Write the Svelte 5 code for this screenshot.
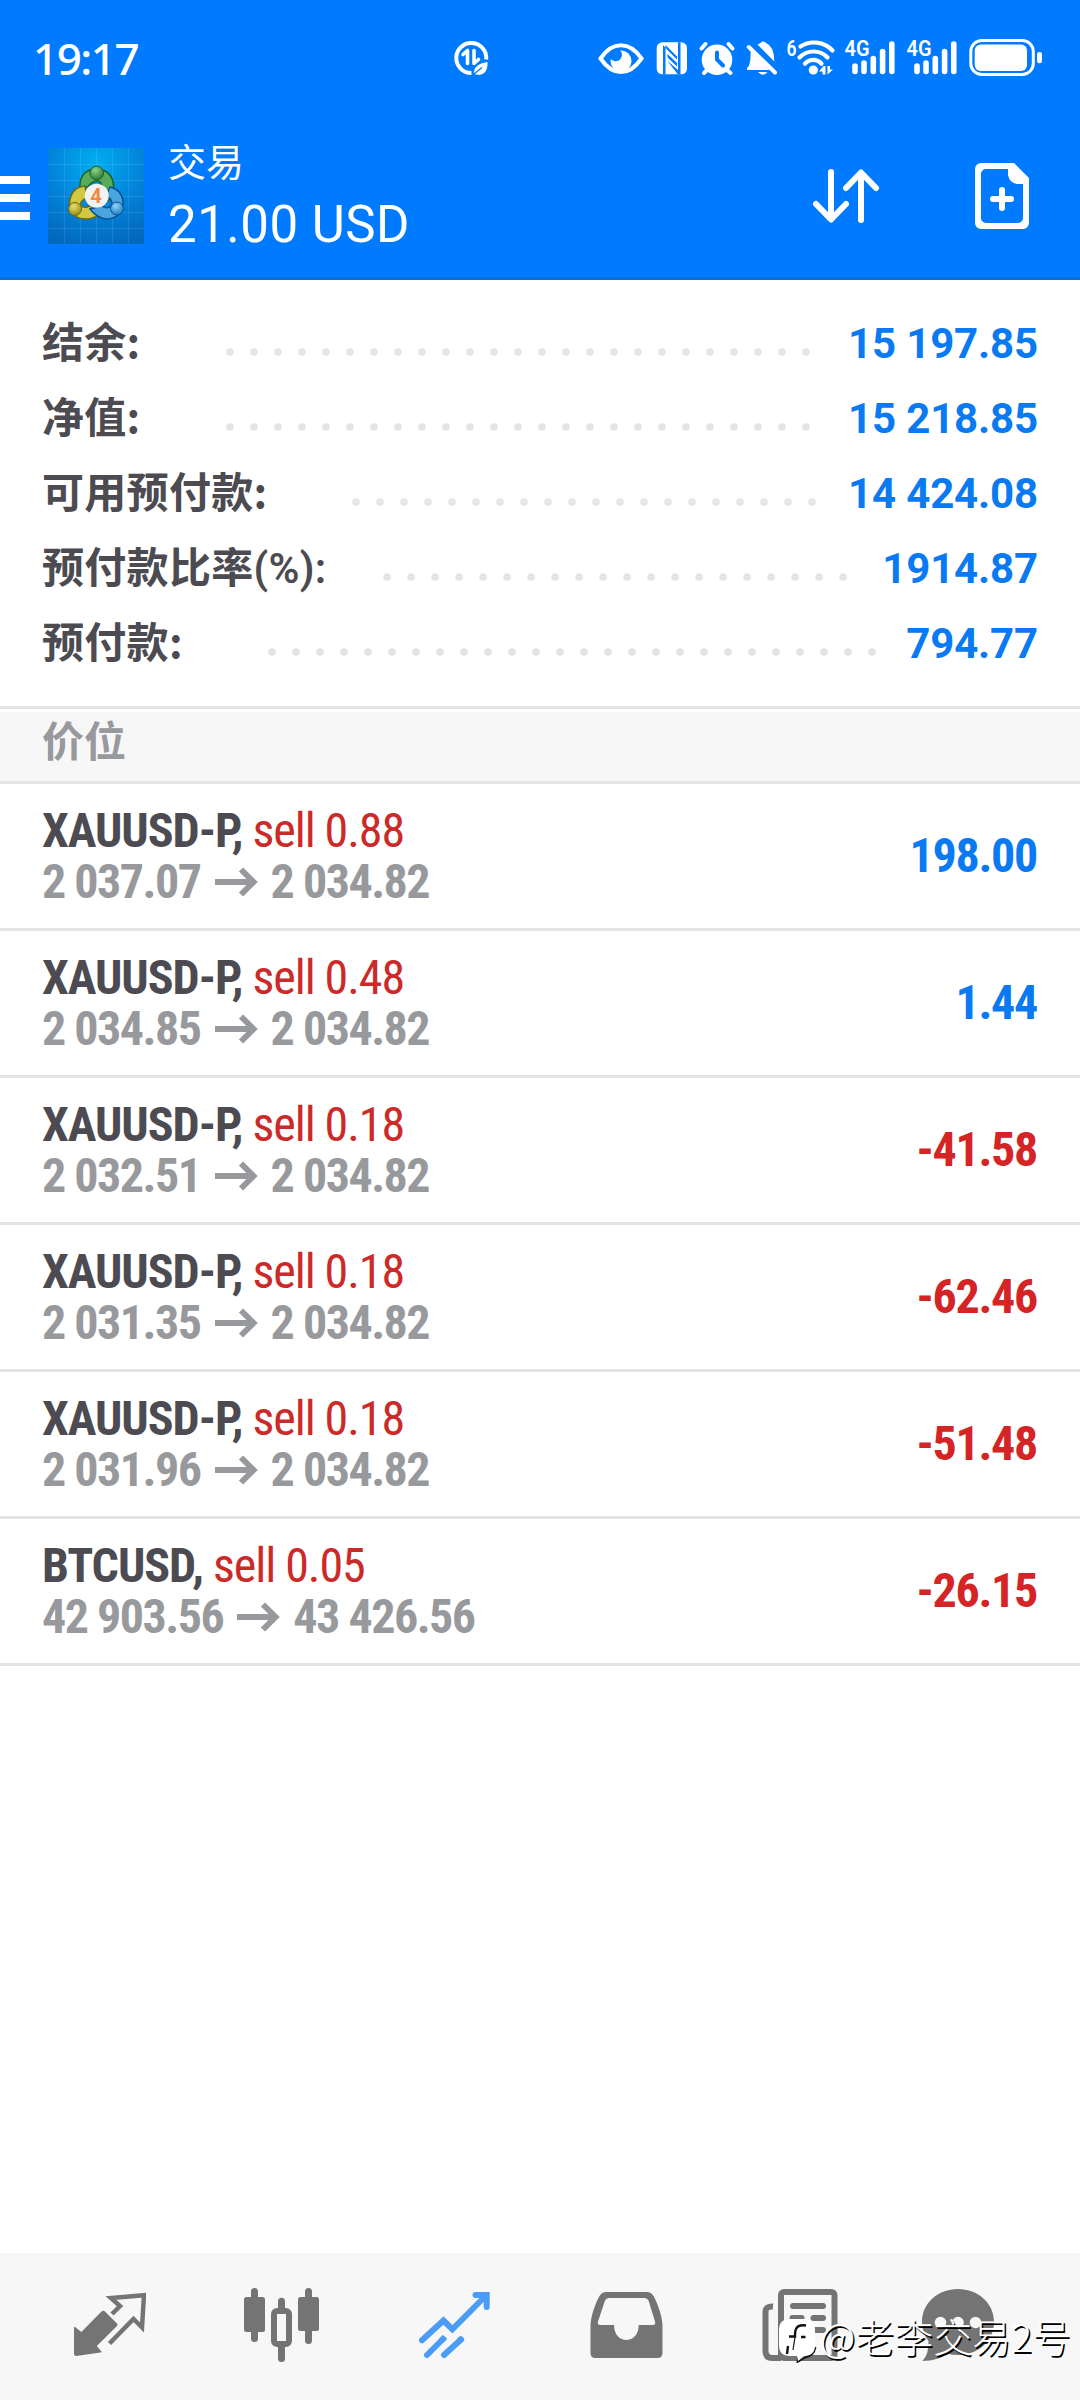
<script lang="ts">
	type Balance = { label: string; suffix?: string; value: string; dots: number };
	type Position = {
		symbol: string;
		volume: string;
		open: string;
		current: string;
		profit: string;
	};

	const balances: Balance[] = [
		{ label: '结余:', value: '15 197.85', dots: 25 },
		{ label: '净值:', value: '15 218.85', dots: 25 },
		{ label: '可用预付款:', value: '14 424.08', dots: 20 },
		{ label: '预付款比率', suffix: '(%):', value: '1914.87', dots: 20 },
		{ label: '预付款:', value: '794.77', dots: 26 }
	];

	const positions: Position[] = [
		{ symbol: 'XAUUSD-P', volume: '0.88', open: '2 037.07', current: '2 034.82', profit: '198.00' },
		{ symbol: 'XAUUSD-P', volume: '0.48', open: '2 034.85', current: '2 034.82', profit: '1.44' },
		{ symbol: 'XAUUSD-P', volume: '0.18', open: '2 032.51', current: '2 034.82', profit: '-41.58' },
		{ symbol: 'XAUUSD-P', volume: '0.18', open: '2 031.35', current: '2 034.82', profit: '-62.46' },
		{ symbol: 'XAUUSD-P', volume: '0.18', open: '2 031.96', current: '2 034.82', profit: '-51.48' },
		{ symbol: 'BTCUSD', volume: '0.05', open: '42 903.56', current: '43 426.56', profit: '-26.15' }
	];

	const bars = [
		{ x: 9, top: 28 },
		{ x: 18, top: 25 },
		{ x: 27.3, top: 20.5 },
		{ x: 36.6, top: 13.5 },
		{ x: 45.8, top: 6 }
	];
</script>

<div class="screen">
	<header>
		<div class="status">
			<span class="time">19:17</span>
			<svg class="saver" width="36" height="36" viewBox="0 0 36 36" fill="none" stroke="#fff">
				<path d="M33.2 19.5A15 15 0 1 0 18.5 33" stroke-width="4" />
				<path d="M10 14.5L14.5 10.5V23.5M21 10.5V23.5L25.5 19.5" stroke-width="3.6" stroke-linejoin="round" stroke-linecap="round" />
				<path d="M21 34Q20 24 34.5 22Q35 34 26 35Z" fill="#fff" stroke="none" />
				<path d="M21 34L29 27.5" stroke="#007aff" stroke-width="1.3" />
			</svg>
			<div class="status-icons">
				<!-- eye comfort -->
				<svg width="48" height="40" viewBox="0 0 48 40">
					<path d="M3.5 20.5C10 11 17 7.3 24 7.3S38 11 44.5 20.5C38 30 31 34 24 34S10 30 3.5 20.5Z" fill="none" stroke="#fff" stroke-width="4" />
					<circle cx="24" cy="23" r="10.5" fill="#fff" />
					<circle cx="18.7" cy="17" r="6.2" fill="#007aff" />
				</svg>
				<!-- nfc -->
				<svg width="33" height="40" viewBox="0 0 33 40">
					<rect x="1.7" y="4.3" width="30.3" height="32" rx="5.5" fill="#fff" />
					<path d="M8 7V36.5H10.5V7L22 18.5V21.5L12 11.5ZM12.5 16L22 25V28.5L12.5 19.5ZM12 22.5L23 36.5H25.5V4.3H23V32Z" fill="#007aff" />
				</svg>
				<!-- alarm -->
				<svg width="38" height="40" viewBox="0 0 38 40" fill="none" stroke="#fff" stroke-width="4" stroke-linecap="round">
					<circle cx="19" cy="21.7" r="15.3" fill="#fff" stroke="none" />
					<path d="M3.5 10.5L7.5 6M30.5 6L34.5 10.5M6 35L9 32M29 32L32.5 35" />
					<path d="M19 14.5V21.5L25 27.5" stroke="#007aff" />
				</svg>
				<!-- muted -->
				<svg width="32" height="40" viewBox="0 0 32 40" fill="#fff">
					<path d="M4.7 12L23.5 32H2Q0 31.5 1.5 29.5Q4.5 28 4.7 14.5Z" />
					<path d="M11.5 6.5L14.5 5Q17 2.2 20 5Q28.5 8.5 28.3 23.5Z" />
					<path d="M12 34H21.5Q17 39.5 12 34Z" />
					<path d="M2.8 9L29 34.5" stroke="#fff" stroke-width="4" stroke-linecap="round" />
				</svg>
				<!-- wifi -->
				<svg class="wifi" width="48" height="40" viewBox="0 0 48 40" fill="none" stroke="#fff" stroke-width="4.2" stroke-linecap="round">
					<text x="-1.5" y="17.5" class="six" textLength="10" lengthAdjust="spacingAndGlyphs">6</text>
					<path d="M12.5 8.5C22 2 36 3.5 44.5 12.5M11.5 19.5C19 11.5 32 11.5 39.5 19.5M17 25.7C21.5 20.5 29 20.5 33.5 25.7" />
					<circle cx="25.3" cy="32" r="4.6" fill="#fff" stroke="none" />
					<path d="M31 33.5L35.5 28H37.5V36.5H34.5V33.5ZM39.5 28H42V31.5H45L39.5 36.5Z" fill="#fff" stroke="none" />
				</svg>
				<div class="signals">
					{#each [1, 2] as sim (sim)}
						<svg width="50" height="40" viewBox="0 0 50 40" stroke="#fff" stroke-width="5.6" stroke-linecap="round">
							<text x="-1.5" y="18.3" class="net" textLength="25" lengthAdjust="spacingAndGlyphs">4G</text>
							{#each bars as bar (bar.x)}
								<path d="M{bar.x} {bar.top}V33.5" />
							{/each}
						</svg>
					{/each}
				</div>
				<!-- battery -->
				<svg width="75" height="40" viewBox="0 0 75 40">
					<rect x="2.8" y="2.5" width="62.5" height="34" rx="11" fill="none" stroke="#fff" stroke-width="3" />
					<rect x="6.7" y="6.5" width="52.3" height="26.5" rx="6" fill="#fff" />
					<rect x="69" y="14" width="5" height="11.3" rx="2.3" fill="#fff" />
				</svg>
			</div>
		</div>

		<div class="toolbar">
			<div class="menu"><i></i><i></i><i></i></div>
			<svg class="logo" width="96" height="96" viewBox="0 0 96 96">
				<defs>
					<radialGradient id="sky" cx=".5" cy=".15" r=".9">
						<stop offset="0" stop-color="#00adf0" />
						<stop offset=".5" stop-color="#0386dc" />
						<stop offset="1" stop-color="#0268bd" />
					</radialGradient>
					<radialGradient id="green" cx=".4" cy=".3" r=".8">
						<stop offset="0" stop-color="#8fd389" />
						<stop offset="1" stop-color="#1c7029" />
					</radialGradient>
					<radialGradient id="yellow" cx=".4" cy=".3" r=".8">
						<stop offset="0" stop-color="#e8e06a" />
						<stop offset="1" stop-color="#8f8210" />
					</radialGradient>
					<radialGradient id="blue" cx=".4" cy=".3" r=".8">
						<stop offset="0" stop-color="#8dd5fa" />
						<stop offset="1" stop-color="#1270ba" />
					</radialGradient>
				</defs>
				<rect width="96" height="96" fill="url(#sky)" />
				<path d="M16.5 0V96M32.5 0V96M48.5 0V96M64.5 0V96M80.5 0V96M0 16.5H96M0 32.5H96M0 48.5H96M0 64.5H96M0 80.5H96" stroke="#fff" stroke-opacity=".1" />
				<!-- three leaning figures around the badge -->
				<path d="M32 37C32 27 39 21 48.5 21S66 28 65.5 39Q65 46 60 53L52 40Q56 34 48.5 33Q43 34 40 39Q36 38 32 40Z" fill="#57ab59" stroke="#1b6128" stroke-width="1.5" />
				<path d="M37 38C27 39 22 46 21.5 56C21 66 29 71 38 71Q46 71 51 66L42 58Q36 61 32 57Q33 52 39 50Z" fill="#d3c842" stroke="#6d6a16" stroke-width="1.5" />
				<path d="M62 39C71 41 75.5 48 75 57C74 67 66 71 58 71Q49 70 42 61L54 58Q59 62 64 57Q64 50 58 48Z" fill="#4aa5df" stroke="#09508f" stroke-width="1.5" />
				<circle cx="48.7" cy="25" r="6.8" fill="url(#green)" stroke="#1b6128" />
				<circle cx="27" cy="61" r="6.5" fill="url(#yellow)" stroke="#6d6a16" />
				<circle cx="69" cy="60.5" r="6.5" fill="url(#blue)" stroke="#09508f" />
				<circle cx="48.7" cy="47.7" r="12" fill="#f3f2f3" />
				<text x="48" y="55" text-anchor="middle" class="four">4</text>
			</svg>
			<div class="title">
				<span class="name">交易</span>
				<span class="sum">21.00 USD</span>
			</div>
			<svg class="sort" width="68" height="56" viewBox="0 0 68 56" fill="none" stroke="#fff" stroke-width="6" stroke-linecap="round" stroke-linejoin="round">
				<path d="M19 4V50M4 36L19 51.5L34 36M49 52V6M34 20L49 4.5L64 20" />
			</svg>
			<svg width="54" height="66" viewBox="0 0 54 66">
				<path fill="#fff" fill-rule="evenodd" d="M6 0H39L54 15V60a6 6 0 0 1-6 6H6a6 6 0 0 1-6-6V6a6 6 0 0 1 6-6ZM11 6H33V12Q34.5 20 42 21H48V55a5 5 0 0 1-5 5H11a5 5 0 0 1-5-5V11a5 5 0 0 1 5-5Z" />
				<path d="M27 27V45M18 36H36" stroke="#fff" stroke-width="6" stroke-linecap="round" />
			</svg>
		</div>
	</header>

	<section class="balances">
		{#each balances as row (row.label)}
			<div class="balance">
				<span class="label" class:with-suffix={row.suffix}>{row.label}{#if row.suffix}<b>{row.suffix}</b>{/if}</span>
				<svg class="dots" width={row.dots * 24} height="8" fill="#e5e5e5">
					{#each { length: row.dots } as _, i}
						<circle cx={i * 24 + 4} cy="4" r="3.8" />
					{/each}
				</svg>
				<span class="value">{row.value}</span>
			</div>
		{/each}
	</section>

	<div class="section-title">价位</div>

	<main>
		{#each positions as p}
			<div class="position">
				<div class="info">
					<div class="deal"><b>{p.symbol},</b> <span class="sell">sell {p.volume}</span></div>
					<div class="prices">
						{p.open}
						<svg width="43" height="30" viewBox="0 0 43 30" fill="none" stroke="#98999d" stroke-width="6">
							<path d="M0 15H38M26 2.5L38.5 15L26 27.5" />
						</svg>
						{p.current}
					</div>
				</div>
				<div class="profit" class:loss={p.profit.startsWith('-')}>{p.profit}</div>
			</div>
		{/each}
	</main>

	<nav>
		<div class="tab">
			<svg width="72" height="66" viewBox="0 0 72 66" fill="#747474">
				<path d="M0 35L1 35L7.3 40L27.5 19.5Q29.3 18 31 19.5L43 31.5Q44 33 43 34L22.8 54L28 60.3L2.4 64Q0 64 0 61.7Z" />
				<path d="M38 22L46 14L37 6L70 3.2L68 35.5L59.5 27L35.5 51.5" fill="none" stroke="#747474" stroke-width="4.5" />
			</svg>
		</div>
		<div class="tab candles">
			<svg width="77" height="76" viewBox="0 0 77 76" fill="#747474">
				<rect x="1" y="10" width="21" height="35" rx="2.5" />
				<rect x="8" y="1" width="7" height="54" rx="3.5" />
				<rect x="55" y="10" width="21" height="34" rx="2.5" />
				<rect x="62" y="1" width="7" height="56" rx="3.5" />
				<rect x="35" y="10.7" width="7" height="14" rx="3.5" />
				<rect x="35" y="56" width="7" height="19" rx="3.5" />
				<rect x="31" y="24" width="15" height="33" rx="3" fill="none" stroke="#747474" stroke-width="6" />
			</svg>
		</div>
		<div class="tab">
			<svg width="71" height="68" viewBox="0 0 71 68" fill="none" stroke="#4a9cf7" stroke-width="6" stroke-linecap="round">
				<path d="M3 49.3L24.5 29.5L33.4 38.3L67.5 4M56.5 4H67.7V16" />
				<path d="M8 64L24 48M25 64L42 48.5" />
				<path d="M22 50L26 46M39.5 50.5L43.5 47" stroke-linecap="butt" />
			</svg>
		</div>
		<div class="tab">
			<svg width="73" height="68" viewBox="0 0 73 68">
				<path fill="#747474" fill-rule="evenodd" d="M.5 34C1 24 6 11 9.5 5Q12 1 16 1H57Q61 1 63.5 5C67 11 72 24 72.5 34V62Q72.5 67 67.5 67H5.5Q.5 67 .5 62ZM19 7Q16 7 15 9.5L8 30.5Q7 34 10.5 34H24C24 54 48.7 54 48.7 34H62.5Q66 34 65 30.5L58.5 9.5Q57.5 7 54.5 7Z" />
			</svg>
		</div>
		<div class="tab news">
			<svg width="76" height="74" viewBox="0 0 76 74" fill="none" stroke="#747474" stroke-width="6" stroke-linecap="round">
				<rect x="19" y="4" width="53.5" height="66" rx="3" />
				<path d="M11 18.5Q3.5 18 3.5 24V63Q3.5 70 10.5 70H19" stroke-linecap="butt" />
				<path d="M31 18H61M30.5 30H39.5M51.5 30H61M30.5 42H39.5M51.5 42H61" />
			</svg>
		</div>
		<div class="tab last">
			<svg width="74" height="74" viewBox="0 0 74 74" fill="#747474">
				<path d="M37 1C57 1 73 15 73 34S57 67 37 67Q31 67 26 65.5Q17 73 1.5 73Q8 66 7.5 53Q1 45 1 34C1 15 17 1 37 1Z" />
				<g fill="#f7f7f7">
					<circle cx="19.5" cy="34.5" r="5.8" />
					<circle cx="37" cy="34.5" r="5.8" />
					<circle cx="54.5" cy="34.5" r="5.8" />
				</g>
			</svg>
		</div>

		<div class="watermark">
			<svg width="38" height="44" viewBox="0 0 38 44">
				<path d="M19 38L18.5 43L26 38.5Q35 37 36.5 28" fill="none" stroke="#111" stroke-width="1.8" />
				<path d="M11 0H25Q36 0 36 11V26Q36 37 25 37L19 42L18 37H11Q0 37 0 26V11Q0 0 11 0Z" fill="#fff" />
				<path d="M27 6.5Q19 5.5 17 10Q16 12 16 17.5H10M22 18H26.5M9 27L8 35" fill="none" stroke="#111" stroke-width="2.4" />
				<path d="M16 18L14 31" fill="none" stroke="#111" stroke-width="1.2" />
			</svg>
			<span>@老李交易2号</span>
		</div>
	</nav>
</div>

<style>
	:global(body) {
		background: #fff;
	}

	.screen {
		display: flex;
		flex-direction: column;
		width: 1080px;
		height: 2400px;
		overflow: hidden;
		background: #fff;
		font-family: Roboto, 'Noto Sans CJK SC', sans-serif;
	}

	svg {
		display: block;
		flex: none;
	}

	header {
		box-sizing: border-box;
		height: 280px;
		background: #007aff;
		border-bottom: 3px solid #0a6fd9;
		color: #fff;
	}

	.status {
		display: flex;
		align-items: center;
		height: 116px;
		padding: 0 37px 0 33px;
	}

	.time {
		width: 420px;
		font: 500 44px/50px 'Noto Sans', sans-serif;
		letter-spacing: -1.5px;
	}

	.status-icons {
		display: flex;
		gap: 10px;
		margin-left: auto;
	}

	.signals {
		display: flex;
		gap: 12px;
	}

	.wifi,
	.signals svg {
		overflow: visible;
	}

	.six,
	.net {
		fill: #fff;
		stroke: none;
		font: 600 22px Roboto, sans-serif;
	}

	.toolbar {
		display: flex;
		align-items: center;
		height: 160px;
		padding-right: 51px;
	}

	.menu {
		display: flex;
		flex-direction: column;
		gap: 10px;
		width: 30px;
		margin: 4px 18px 0 0;
	}

	.menu i {
		height: 8px;
		background: #fff;
	}

	.four {
		fill: #f08a3c;
		font: 700 20px Roboto, sans-serif;
	}

	.title {
		display: flex;
		flex: 1;
		flex-direction: column;
		margin-left: 24px;
	}

	.name {
		font-size: 38px;
		line-height: 54px;
	}

	.sum {
		margin-bottom: -4px;
		font-size: 51px;
		line-height: 70px;
		letter-spacing: 0.5px;
	}

	.sort {
		margin-right: 95px;
	}

	.balances {
		box-sizing: border-box;
		height: 429px;
		padding: 26px 42px 0 42px;
		border-bottom: 3px solid #e4e4e4;
	}

	.balance {
		display: flex;
		align-items: center;
		height: 75px;
	}

	.label {
		margin: -7px 85px 0 0;
		color: #4c4b51;
		font: 700 42px/60px 'Noto Sans CJK SC', sans-serif;
		letter-spacing: 0.3px;
	}

	.label b {
		font: 600 42px/60px Roboto, sans-serif;
	}

	.with-suffix {
		margin: -3px 57px 0 0;
	}

	.dots {
		margin-top: 16px;
	}

	.value {
		margin-left: auto;
		color: #0a7af2;
		font-size: 42px;
		font-weight: 700;
		letter-spacing: -0.15px;
	}

	.section-title {
		box-sizing: border-box;
		height: 72px;
		margin-top: 3px;
		padding: 0 42px;
		background: #f7f7f7;
		border-bottom: 3px solid #e4e4e4;
		color: #98999d;
		font-size: 42px;
		font-weight: 700;
		line-height: 61px;
	}

	main {
		flex: 1;
		font-size: 48px;
		font-stretch: 75%;
	}

	.position {
		box-sizing: border-box;
		display: flex;
		align-items: center;
		justify-content: space-between;
		height: 147px;
		padding: 0 43px 0 42px;
		border-bottom: 3px solid #e4e4e4;
	}

	.info {
		line-height: 51px;
	}

	.deal {
		letter-spacing: -1.05px;
	}

	.deal b {
		color: #4c4b51;
		font-weight: 700;
	}

	.sell {
		color: #cc2929;
	}

	.prices {
		display: flex;
		align-items: center;
		gap: 13px;
		color: #98999d;
		font-weight: 700;
		letter-spacing: -1.5px;
	}

	.prices svg {
		margin-left: 1px;
	}

	.profit {
		margin-top: -2px;
		color: #0a7af2;
		font-weight: 700;
		letter-spacing: -1.3px;
	}

	.loss {
		color: #d42426;
	}

	nav {
		position: relative;
		box-sizing: border-box;
		display: flex;
		height: 147px;
		padding: 0 0 3px 24px;
		background: #f7f7f7;
	}

	.tab {
		box-sizing: border-box;
		display: flex;
		align-items: center;
		justify-content: center;
		width: 172px;
	}

	.candles {
		padding-right: 1px;
	}

	.news {
		padding-left: 4px;
	}

	.last {
		width: 147px;
	}

	.watermark {
		position: absolute;
		top: 66px;
		right: 9px;
		display: flex;
		align-items: center;
		gap: 3px;
		color: #fff;
		font: 300 39px/40px 'Noto Sans CJK SC', sans-serif;
		text-shadow: 1.5px 1.5px 0.5px #000;
	}

	.watermark span {
		margin-top: -12px;
	}
</style>
